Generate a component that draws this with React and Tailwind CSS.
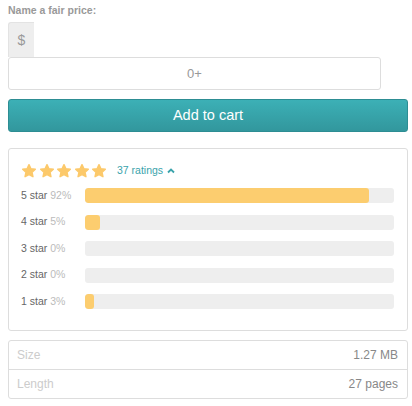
import React from 'react'

const rows = [
  { label: '5 star', pct: 92 },
  { label: '4 star', pct: 5 },
  { label: '3 star', pct: 0 },
  { label: '2 star', pct: 0 },
  { label: '1 star', pct: 3 },
]

function Star() {
  return (
    <svg width="16" height="16" viewBox="0 0 24 24" className="block">
      <path
        d="M12 2.5l2.9 6.1 6.6.8-4.9 4.6 1.3 6.6L12 17.3l-5.9 3.3 1.3-6.6-4.9-4.6 6.6-.8z"
        fill="#fcc96b"
        stroke="#fcc96b"
        strokeWidth="2.2"
        strokeLinejoin="round"
      />
    </svg>
  )
}

export default function App() {
  return (
    <div className="w-[412px] h-[406px] bg-white pl-2 pr-1 pt-[3px] font-['Liberation_Sans',Arial,sans-serif]">
      <div className="text-[10.5px] leading-[14px] font-bold text-[#999]">Name a fair price:</div>

      <div className="mt-[5px] w-[26px] h-[35px] bg-[#eee] border-l border-t border-[#e3e3e3] rounded-tl-[3px] flex items-center justify-center text-[14px] text-[#999]">
        $
      </div>
      <div className="w-[373px] h-[33px] border border-[#ddd] rounded-[3px] flex items-center justify-center text-[13px] text-[#999]">
        0+
      </div>

      <button className="mt-[9px] w-[400px] h-[33px] rounded-[3px] border border-[#2d8d93] bg-gradient-to-b from-[#3cb0b6] to-[#32979d] text-white text-[14.5px] flex items-center justify-center">
        Add to cart
      </button>

      <div className="mt-[16px] w-[400px] h-[183px] border border-[#ddd] rounded-[3px] pl-[12px] pr-[13px] pt-[14px]">
        <div className="flex items-center h-[16px]">
          <div className="flex gap-[1.5px]">
            <Star />
            <Star />
            <Star />
            <Star />
            <Star />
          </div>
          <span className="ml-[10px] text-[10.5px] text-[#3aa3ab] flex items-center gap-[4px]">
            37 ratings
            <svg width="8" height="6" viewBox="0 0 8 6">
              <path d="M1 4.5L4 1.5L7 4.5" stroke="#3aa3ab" strokeWidth="1.8" fill="none" />
            </svg>
          </span>
        </div>

        <div className="mt-[9px] flex flex-col gap-[11.5px]">
          {rows.map(r => (
            <div key={r.label} className="flex items-center h-[15px]">
              <div className="w-[64px] text-[10.5px] text-[#666]">
                {r.label} <span className="text-[#bbb]">{r.pct}%</span>
              </div>
              <div className="flex-1 h-[15px] bg-[#eee] rounded-[3px] overflow-hidden">
                <div className="h-full bg-[#fccd6f] rounded-[3px]" style={{ width: `${r.pct}%` }} />
              </div>
            </div>
          ))}
        </div>
      </div>

      <div className="mt-[9px] w-[400px] border border-[#ddd] rounded-[3px] text-[12px]">
        <div className="h-[29px] flex items-center justify-between pl-[8px] pr-[9px] border-b border-[#ddd]">
          <span className="text-[#ccc]">Size</span>
          <span className="text-[#888]">1.27 MB</span>
        </div>
        <div className="h-[28px] flex items-center justify-between pl-[8px] pr-[9px]">
          <span className="text-[#ccc]">Length</span>
          <span className="text-[#888]">27 pages</span>
        </div>
      </div>
    </div>
  )
}
